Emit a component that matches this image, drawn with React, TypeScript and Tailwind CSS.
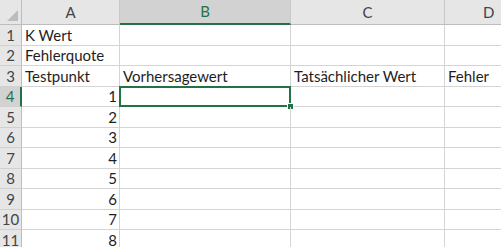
import React from "react";

const rows: { a?: string; b?: string; c?: string; d?: string; num?: boolean }[] = [
  { a: "K Wert" },
  { a: "Fehlerquote" },
  { a: "Testpunkt", b: "Vorhersagewert", c: "Tatsächlicher Wert", d: "Fehler" },
  { a: "1", num: true },
  { a: "2", num: true },
  { a: "3", num: true },
  { a: "4", num: true },
  { a: "5", num: true },
  { a: "6", num: true },
  { a: "7", num: true },
  { a: "8", num: true },
];

const font = { fontFamily: "Lato, 'Liberation Sans', sans-serif" };

export default function App() {
  return (
    <div className="w-[501px] h-[247px] overflow-hidden bg-white text-[15px] text-[#1e1e1e]" style={font}>
      {/* header row */}
      <div className="flex h-[25px]">
        <div className="relative w-[22px] shrink-0 bg-[#e6e6e6] border-r border-b border-[#bdbdbd]">
          <div className="absolute right-[3px] bottom-[3px] w-0 h-0 border-l-[11px] border-l-transparent border-b-[11px] border-b-[#bcbcbc]" />
        </div>
        <div className="w-[98px] shrink-0 bg-[#e6e6e6] border-r border-b border-r-[#c8c8c8] border-b-[#bdbdbd] flex items-center justify-center text-[#444]">A</div>
        <div className="w-[171px] shrink-0 bg-[#d2d2d2] border-r border-r-[#c8c8c8] border-b-2 border-b-[#217346] flex items-center justify-center text-[#217346]">B</div>
        <div className="w-[154px] shrink-0 bg-[#e6e6e6] border-r border-b border-r-[#c8c8c8] border-b-[#bdbdbd] flex items-center justify-center text-[#444]">C</div>
        <div className="flex-1 bg-[#e6e6e6] border-b border-b-[#bdbdbd] flex items-center justify-start pl-[38px] text-[#444]">D</div>
      </div>
      {rows.map((r, i) => {
        const sel = i === 3;
        return (
          <div key={i} className="flex h-[20.5px]">
            <div
              className={
                "w-[22px] shrink-0 flex items-center justify-center border-b border-b-[#d0d0d0] " +
                (sel
                  ? "bg-[#d2d2d2] text-[#217346] border-r-2 border-r-[#217346]"
                  : "bg-[#e6e6e6] text-[#444] border-r border-r-[#bdbdbd]")
              }
            >
              {i + 1}
            </div>
            <div
              className={
                "w-[98px] shrink-0 border-r border-b border-[#d4d4d4] flex items-end pb-[1px] leading-[18px] whitespace-nowrap " +
                (r.num ? "justify-end pr-[2px]" : "pl-[3px]")
              }
            >
              {r.a}
            </div>
            <div className="relative w-[171px] shrink-0 border-r border-b border-[#d4d4d4] flex items-end pb-[1px] pl-[3px] leading-[18px] whitespace-nowrap">
              {r.b}
              {sel && (
                <>
                  <div className="absolute left-[-1px] top-[-1px] right-[-1px] bottom-[-1px] border-2 border-[#217346]" />
                  <div className="absolute right-[-4px] bottom-[-4px] w-[7px] h-[7px] bg-[#217346] border border-white" />
                </>
              )}
            </div>
            <div className="w-[154px] shrink-0 border-r border-b border-[#d4d4d4] flex items-end pb-[1px] pl-[3px] leading-[18px] whitespace-nowrap">
              {r.c}
            </div>
            <div className="flex-1 border-b border-[#d4d4d4] flex items-end pb-[1px] pl-[3px] leading-[18px] whitespace-nowrap">
              {r.d}
            </div>
          </div>
        );
      })}
    </div>
  );
}
